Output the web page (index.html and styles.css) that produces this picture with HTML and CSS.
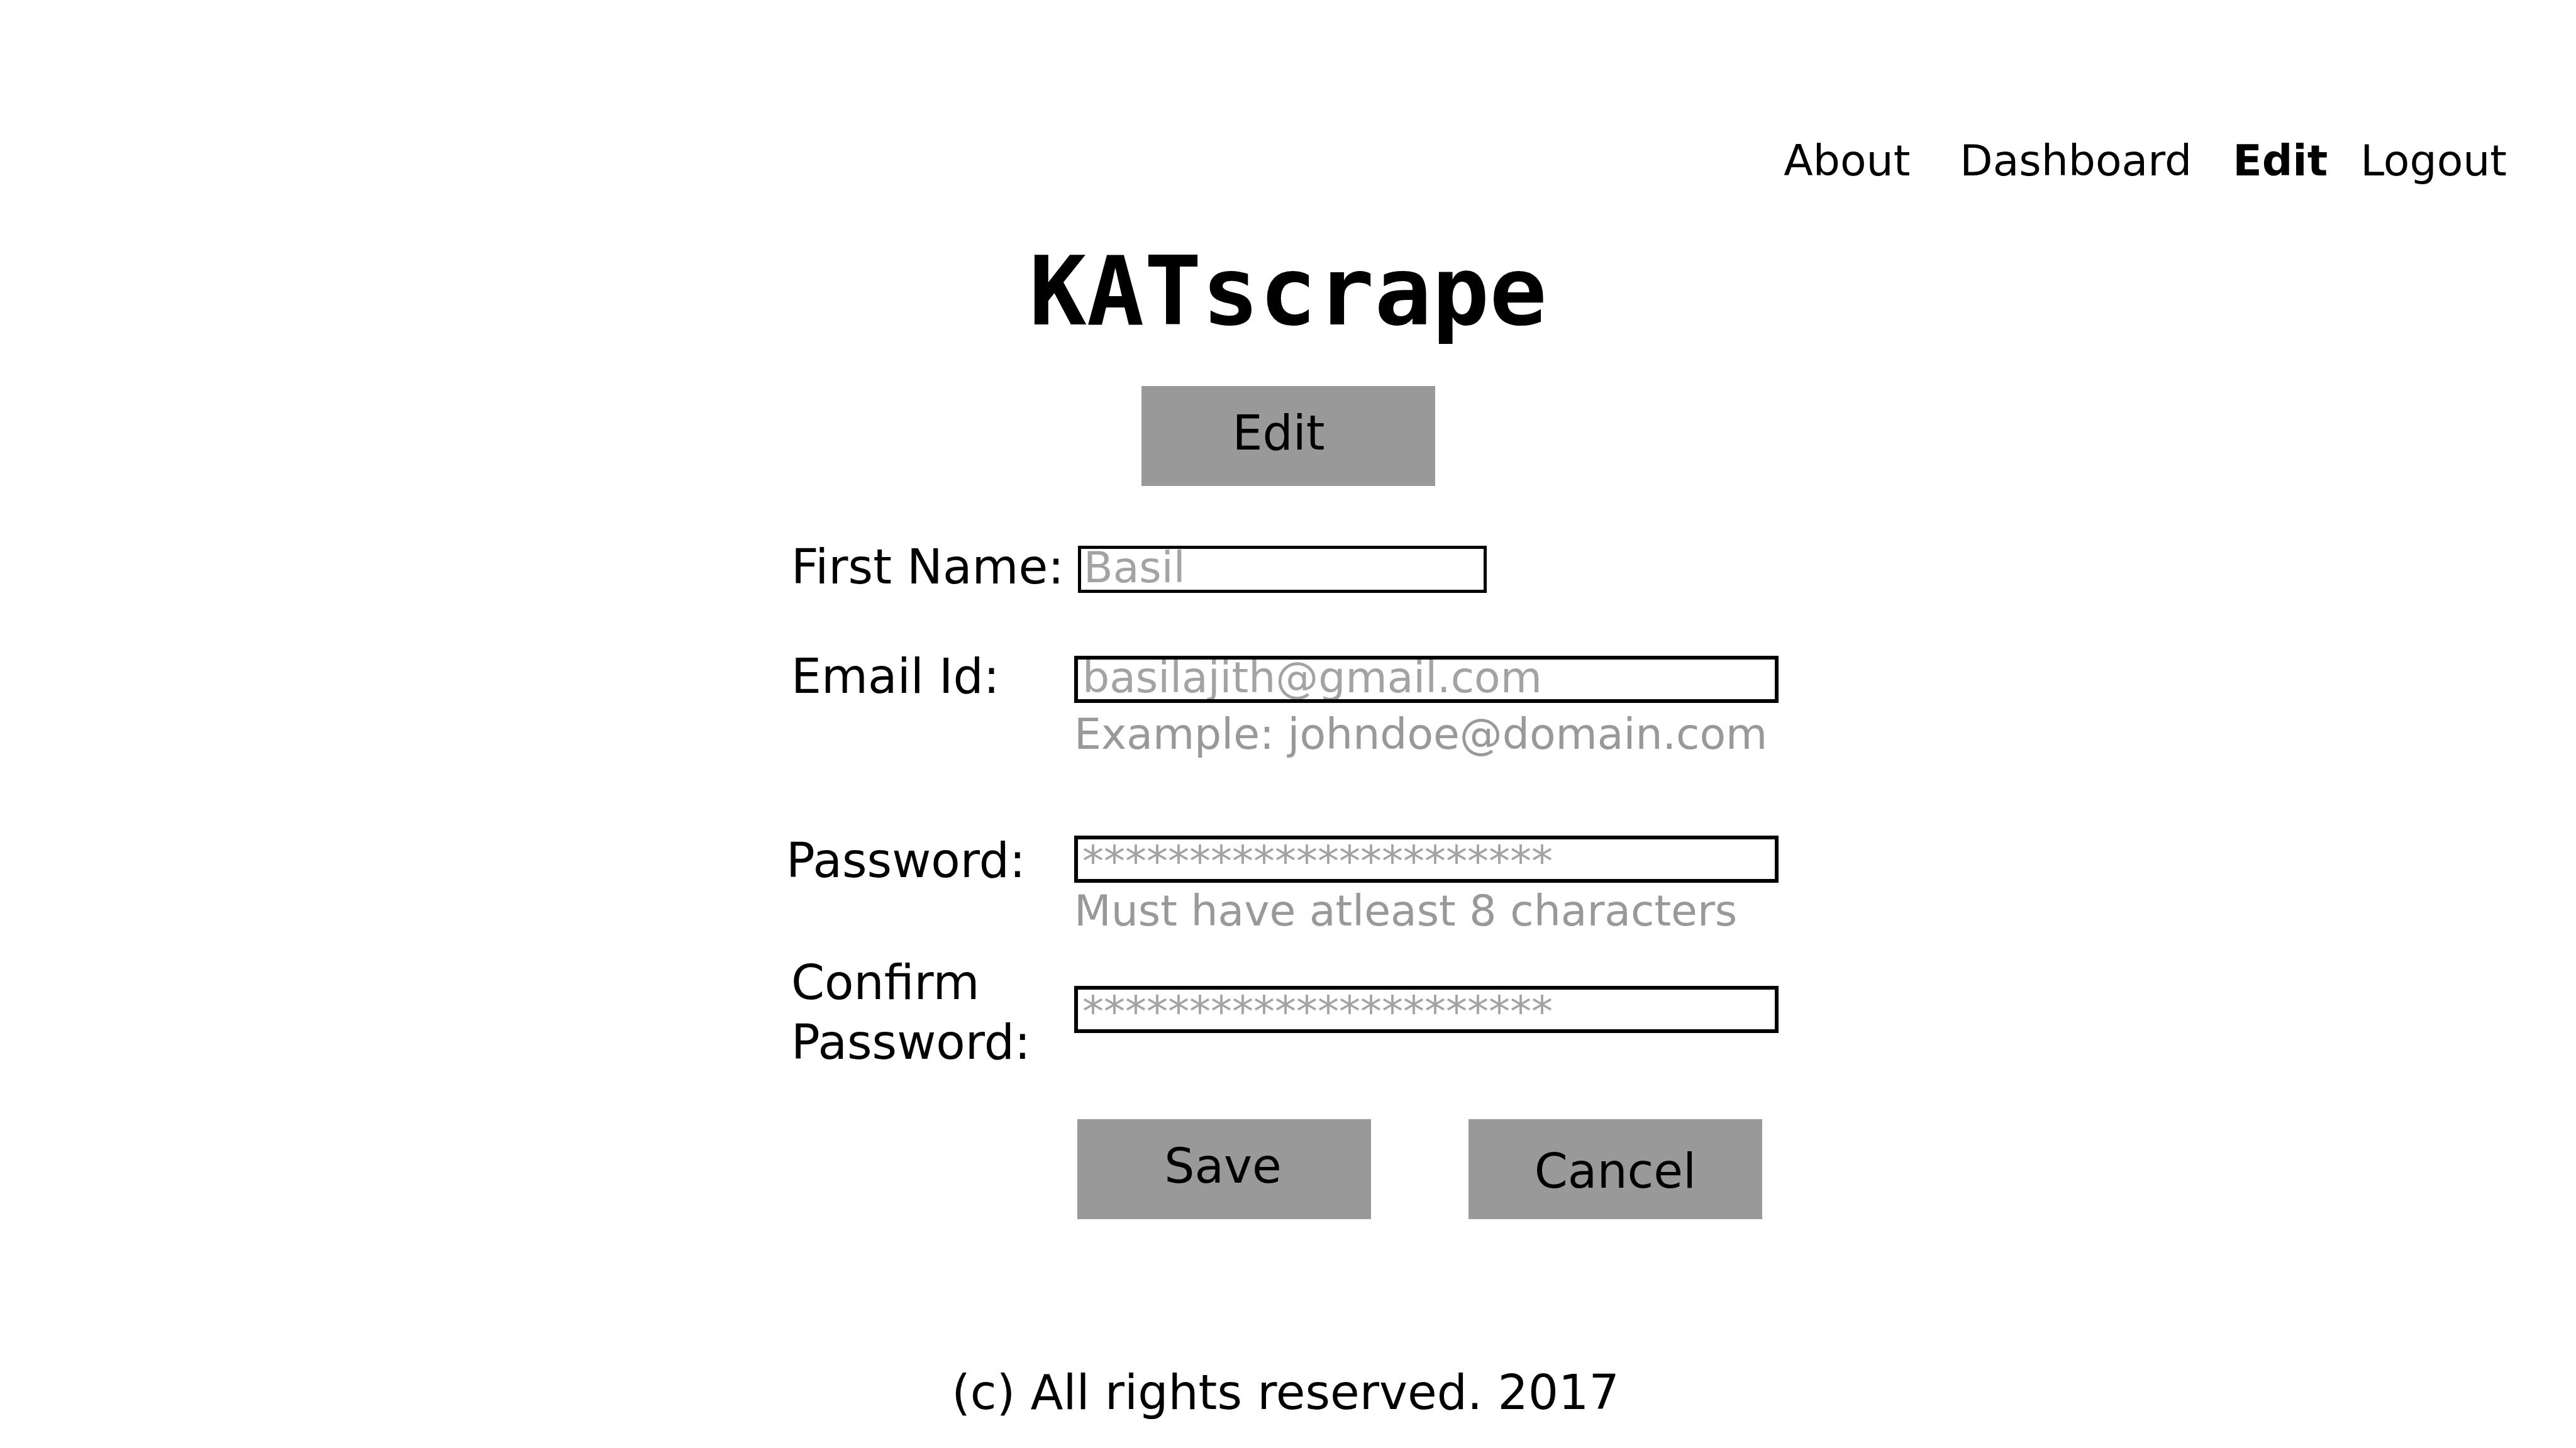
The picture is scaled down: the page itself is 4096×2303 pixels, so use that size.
FILE: index.html
```html
<!DOCTYPE html>
<html lang="en">
<head>
  <meta charset="utf-8">
  <title>KATscrape - Edit</title>
  <link rel="stylesheet" href="styles.css">
</head>
<body>
  <header class="header">
    <nav class="nav">
      <a class="nav-about" href="#about">About</a>
      <a class="nav-dashboard" href="#dashboard">Dashboard</a>
      <a class="nav-edit" href="#edit" aria-current="page">Edit</a>
      <a class="nav-logout" href="#logout">Logout</a>
    </nav>
  </header>
  <main class="main">
    <h1 class="title">KATscrape</h1>
    <button class="button button-edit" type="button">Edit</button>
    <form class="form">
      <div class="row row-name">
        <label class="label" for="first-name">First Name:</label>
        <div class="field">
          <input class="input input-short" id="first-name" type="text" placeholder="Basil">
        </div>
      </div>
      <div class="row row-email">
        <label class="label" for="email">Email Id:</label>
        <div class="field">
          <input class="input" id="email" type="email" placeholder="basilajith@gmail.com" aria-describedby="email-hint">
          <p class="hint" id="email-hint">Example: johndoe@domain.com</p>
        </div>
      </div>
      <div class="row row-password">
        <label class="label" for="password">Password:</label>
        <div class="field">
          <input class="input input-secret" id="password" type="password" placeholder="**********************" aria-describedby="password-hint">
          <p class="hint" id="password-hint">Must have atleast 8 characters</p>
        </div>
      </div>
      <div class="row row-confirm">
        <label class="label" for="confirm">Confirm Password:</label>
        <div class="field">
          <input class="input input-secret" id="confirm" type="password" placeholder="**********************">
        </div>
      </div>
      <div class="actions">
        <button class="button" type="submit">Save</button>
        <button class="button button-cancel" type="button">Cancel</button>
      </div>
    </form>
  </main>
  <footer class="footer">(c) All rights reserved. 2017</footer>
</body>
</html>
```
FILE: styles.css
```css
* {
  box-sizing: border-box;
}

body {
  margin: 0;
  min-height: 100vh;
  display: flex;
  flex-direction: column;
  background: #fff;
  color: #000;
  font-family: "DejaVu Sans", sans-serif;
  font-size: 76px;
  line-height: 95px;
}

.header {
  padding: 213px 110px 0;
}

.nav {
  display: flex;
  justify-content: flex-end;
  font-size: 68px;
  line-height: 86px;
}

.nav a {
  color: inherit;
  text-decoration: none;
}

.nav-about {
  margin-right: 79px;
}

.nav-dashboard {
  margin-right: 65px;
}

.nav-edit {
  margin-right: 52px;
  font-weight: bold;
}

.main {
  display: flex;
  flex-direction: column;
  align-items: center;
  padding-top: 70px;
}

.title {
  margin: 0 0 55px;
  font-family: "DejaVu Sans Mono", monospace;
  font-size: 152px;
  font-weight: bold;
  line-height: 190px;
}

.button {
  width: 467px;
  height: 159px;
  padding: 0 4px 10px 0;
  border: 0;
  background: #999;
  color: inherit;
  font: inherit;
}

.button-edit {
  padding-right: 30px;
}

.button-cancel {
  padding: 6px 0 0;
}

.form {
  width: 1596px;
  max-width: 100%;
  margin-top: 81px;
  padding-right: 18px;
}

.row {
  display: grid;
  grid-template-columns: 450px 1fr;
  align-items: start;
  padding-left: 8px;
}

.row-name {
  margin-bottom: 79px;
}

.row-name .field {
  padding: 14px 0 0 6px;
}

.row-email {
  margin-bottom: 110px;
}

.row-email .field {
  padding-top: 15px;
}

.row-email .hint {
  margin-top: 7px;
}

.row-password {
  grid-template-columns: 458px 1fr;
  margin-bottom: 23px;
  padding-left: 0;
}

.row-password .field {
  padding-top: 8px;
}

.row-password .hint {
  margin-top: 2px;
}

.row-confirm .field {
  padding-top: 53px;
}

.input {
  display: block;
  width: 100%;
  height: 75px;
  margin: 0;
  padding: 0 7px 6px;
  border: 6px solid #000;
  border-radius: 0;
  background: #fff;
  color: #000;
  font: inherit;
  font-size: 68px;
  line-height: 57px;
}

.input::placeholder {
  color: #a3a3a3;
  opacity: 1;
}

.input-short {
  width: 650px;
  padding-left: 4px;
  border-width: 5px;
}

.input-secret {
  padding: 6px 7px 0;
}

.hint {
  margin: 0;
  color: #999;
  font-size: 68px;
  line-height: 86px;
  white-space: nowrap;
}

.actions {
  display: flex;
  gap: 155px;
  margin-top: 75px;
  padding-left: 463px;
}

.footer {
  margin-top: auto;
  padding: 0 8px 41px 0;
  text-align: center;
}
```
